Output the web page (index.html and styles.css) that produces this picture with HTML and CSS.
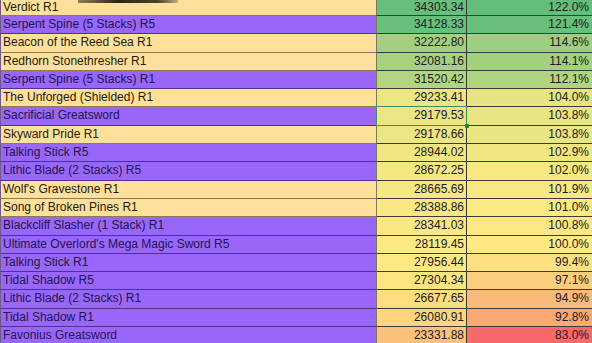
FILE: index.html
```html
<!DOCTYPE html>
<html>
<head>
<meta charset="utf-8">
<link rel="stylesheet" href="styles.css">
</head>
<body>
<div class="sheet">
  <div class="shade"></div>
  <div class="row y first"><div class="name">Verdict R1</div><div class="val" style="background:#66bf7b">34303.34</div><div class="pct" style="background:#63be7b">122.0%</div></div>
  <div class="row p"><div class="name">Serpent Spine (5 Stacks) R5</div><div class="val" style="background:#68c07c">34128.33</div><div class="pct" style="background:#67bf7b">121.4%</div></div>
  <div class="row y"><div class="name">Beacon of the Reed Sea R1</div><div class="val" style="background:#a2d07f">32222.80</div><div class="pct" style="background:#9ccf7f">114.6%</div></div>
  <div class="row y"><div class="name">Redhorn Stonethresher R1</div><div class="val" style="background:#a6d17f">32081.16</div><div class="pct" style="background:#a1d07f">114.1%</div></div>
  <div class="row p"><div class="name">Serpent Spine (5 Stacks) R1</div><div class="val" style="background:#b1d580">31520.42</div><div class="pct" style="background:#b0d47f">112.1%</div></div>
  <div class="row y"><div class="name">The Unforged (Shielded) R1</div><div class="val" style="background:#ebe583">29233.41</div><div class="pct" style="background:#e8e483">104.0%</div></div>
  <div class="row p"><div class="name">Sacrificial Greatsword</div><div class="val sel" style="background:#ebe583">29179.53</div><div class="pct" style="background:#eae583">103.8%</div></div>
  <div class="row y"><div class="name">Skyward Pride R1</div><div class="val" style="background:#ece583">29178.66</div><div class="pct" style="background:#eae583">103.8%</div></div>
  <div class="row p"><div class="name">Talking Stick R5</div><div class="val" style="background:#f0e683">28944.02</div><div class="pct" style="background:#f0e683">102.9%</div></div>
  <div class="row p"><div class="name">Lithic Blade (2 Stacks) R5</div><div class="val" style="background:#f5e783">28672.25</div><div class="pct" style="background:#f6e883">102.0%</div></div>
  <div class="row y"><div class="name">Wolf's Gravestone R1</div><div class="val" style="background:#f5e783">28665.69</div><div class="pct" style="background:#f7e883">101.9%</div></div>
  <div class="row y"><div class="name">Song of Broken Pines R1</div><div class="val" style="background:#f9e883">28388.86</div><div class="pct" style="background:#fbe983">101.0%</div></div>
  <div class="row p"><div class="name">Blackcliff Slasher (1 Stack) R1</div><div class="val" style="background:#fae883">28341.03</div><div class="pct" style="background:#fce983">100.8%</div></div>
  <div class="row p"><div class="name">Ultimate Overlord's Mega Magic Sword R5</div><div class="val" style="background:#fde983">28119.45</div><div class="pct" style="background:#ffe984">100.0%</div></div>
  <div class="row p"><div class="name">Talking Stick R1</div><div class="val" style="background:#ffe984">27956.44</div><div class="pct" style="background:#fee082">99.4%</div></div>
  <div class="row p"><div class="name">Tidal Shadow R5</div><div class="val" style="background:#ffe482">27304.34</div><div class="pct" style="background:#fdcd7e">97.1%</div></div>
  <div class="row p"><div class="name">Lithic Blade (2 Stacks) R1</div><div class="val" style="background:#fedd81">26677.65</div><div class="pct" style="background:#fcba7a">94.9%</div></div>
  <div class="row p"><div class="name">Tidal Shadow R1</div><div class="val" style="background:#fdd67f">26080.91</div><div class="pct" style="background:#fba876">92.8%</div></div>
  <div class="row p"><div class="name">Favonius Greatsword</div><div class="val" style="background:#fcc27b">23331.88</div><div class="pct" style="background:#f8696b">83.0%</div></div>
</div>
</body>
</html>
```
FILE: styles.css
```css
html, body {
  margin: 0;
  padding: 0;
  background: #9966ff;
  overflow: hidden;
}
.sheet {
  position: relative;
  font-family: "Liberation Sans", Arial, sans-serif;
  font-size: 12px;
  color: #1e1a22;
}
.shade {
  position: absolute;
  left: 78px;
  top: 0;
  width: 100px;
  height: 3px;
  background: linear-gradient(90deg, rgba(40,32,24,0.5), #2a241c 40%, #4a4030 80%, rgba(120,100,70,0.4));
  z-index: 3;
}
.row {
  display: grid;
  grid-template-columns: 376px 91px 1fr;
  height: 18.3px;
  line-height: 16px;
}
.row.first {
  height: 16px;
  line-height: 14px;
}
.row > div {
  box-sizing: border-box;
  border-bottom: 1px solid #3f3a35;
  white-space: nowrap;
  overflow: hidden;
}
.name {
  padding-left: 2px;
  border-left: 1px solid #6d5a8a;
}
.y .name {
  background: #ffe09a;
  border-bottom-color: #8a7a58;
  color: #221c0e;
}
.p .name {
  background: #9966fa;
  border-bottom-color: #4d3390;
  color: #21164a;
}
.val {
  text-align: right;
  padding-right: 2px;
  border-left: 1px solid #7a7a55;
  border-right: 1px solid #3a3a2c;
  border-bottom-color: #54584a;
  position: relative;
}
.pct {
  text-align: right;
  padding-right: 3px;
  border-bottom-color: #54584a;
}
.sel {
  overflow: visible !important;
}
.sel::after {
  content: "";
  position: absolute;
  left: -1px;
  top: -1px;
  right: -1px;
  bottom: -1px;
  border: 1px solid #3d8f5e;
}
.sel::before {
  content: "";
  position: absolute;
  right: -3px;
  bottom: -3px;
  width: 4px;
  height: 4px;
  background: #2f7d4f;
  z-index: 2;
}
```
